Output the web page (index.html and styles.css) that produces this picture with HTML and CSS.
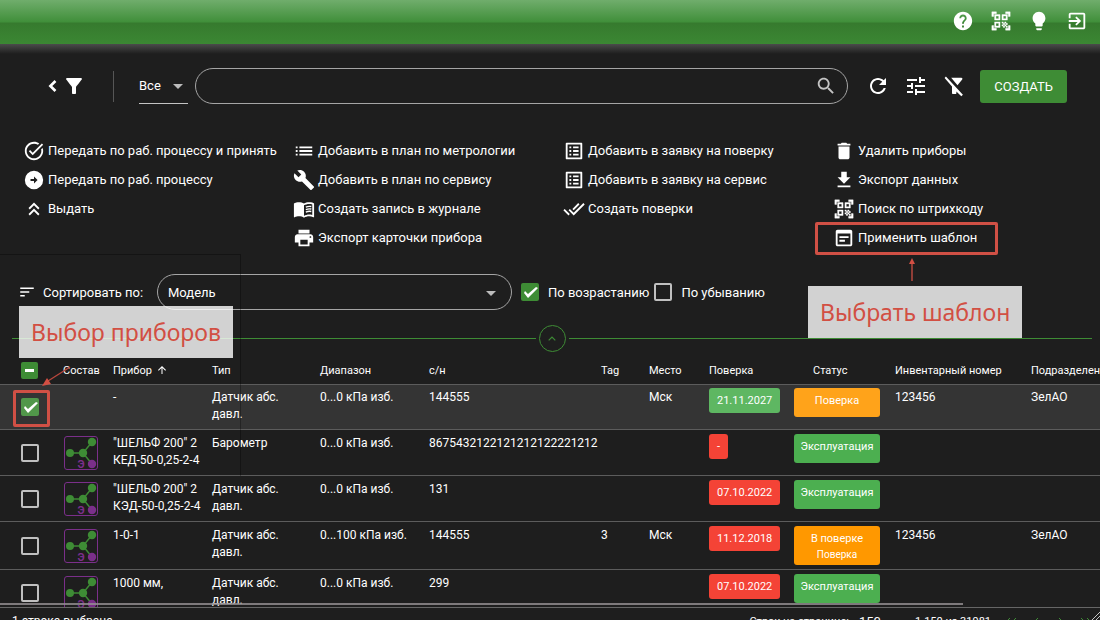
FILE: index.html
```html
<!DOCTYPE html>
<html lang="ru">
<head>
<meta charset="utf-8">
<meta name="viewport" content="width=device-width, initial-scale=1">
<title>Приборы</title>
<link rel="stylesheet" href="styles.css">
</head>
<body>
<svg class="sprite" aria-hidden="true">
  <symbol id="i-help" viewBox="0 0 24 24"><path d="M12 2C6.48 2 2 6.48 2 12s4.48 10 10 10 10-4.48 10-10S17.52 2 12 2zm1 17h-2v-2h2v2zm2.07-7.75l-.9.92C13.45 12.9 13 13.5 13 15h-2v-.5c0-1.1.45-2.1 1.17-2.83l1.24-1.26c.37-.36.59-.86.59-1.41 0-1.1-.9-2-2-2s-2 .9-2 2H8c0-2.21 1.79-4 4-4s4 1.79 4 4c0 .88-.36 1.68-.93 2.25z"/></symbol>
  <symbol id="i-qr" viewBox="0 0 24 24"><path stroke="currentColor" stroke-width=".4" d="M9.5 6.5v3h-3v-3h3M11 5H5v6h6V5zM9.5 14.5v3h-3v-3h3M11 13H5v6h6v-6zM17.5 6.5v3h-3v-3h3M19 5h-6v6h6V5zM13 13h1.5v1.5H13zM14.5 14.5H16V16h-1.5zM16 13h1.5v1.5H16zM13 16h1.5v1.5H13zM14.5 17.5H16V19h-1.5zM16 16h1.5v1.5H16zM17.5 14.5H19V16h-1.5zM17.5 17.5H19V19h-1.5zM22 7h-2V4h-3V2h5v5zM22 22v-5h-2v3h-3v2h5zM2 22h5v-2H4v-3H2v5zM2 2v5h2V4h3V2H2z"/></symbol>
  <symbol id="i-bulb" viewBox="0 0 24 24"><path d="M9 21c0 .55.45 1 1 1h4c.55 0 1-.45 1-1v-1H9v1zm3-19C8.14 2 5 5.14 5 9c0 2.38 1.19 4.47 3 5.74V17c0 .55.45 1 1 1h6c.55 0 1-.45 1-1v-2.26c1.81-1.27 3-3.36 3-5.74 0-3.86-3.14-7-7-7z"/></symbol>
  <symbol id="i-exit" viewBox="0 0 24 24"><path d="M10.09 15.59L11.5 17l5-5-5-5-1.41 1.41L12.67 11H3v2h9.67l-2.58 2.59zM19 3H5c-1.11 0-2 .9-2 2v4h2V5h14v14H5v-4H3v4c0 1.1.89 2 2 2h14c1.1 0 2-.9 2-2V5c0-1.1-.9-2-2-2z"/></symbol>
  <symbol id="i-back" viewBox="6 0 12 24"><path d="M15.4 7.9L13.5 6l-6 6 6 6 1.9-1.9L11.3 12z"/></symbol>
  <symbol id="i-filter" viewBox="0 0 24 24"><path d="M4.25 5.61C6.27 8.2 10 13 10 13v6c0 .55.45 1 1 1h2c.55 0 1-.45 1-1v-6s3.72-4.8 5.74-7.39A1 1 0 0 0 18.95 4H5.04c-.83 0-1.3.95-.79 1.61z"/></symbol>
  <symbol id="i-filter-off" viewBox="0 0 24 24"><path d="M20.2 5.4C20.7 4.8 20.3 3.8 19.4 3.8H9.2l6.3 7.4zM3.9 2.6L2.6 3.9 10 12.5V19c0 .55.45 1 1 1h2.4c.55 0 1-.45 1-1v-1.6l4.9 4.9 1.6-1.6z"/></symbol>
  <symbol id="i-refresh" viewBox="0 0 24 24"><path d="M17.65 6.35C16.2 4.9 14.21 4 12 4c-4.42 0-7.99 3.58-7.99 8s3.57 8 7.99 8c3.73 0 6.84-2.55 7.73-6h-2.08c-.82 2.33-3.04 4-5.65 4-3.31 0-6-2.69-6-6s2.69-6 6-6c1.66 0 3.14.69 4.22 1.78L13 11h7V4l-2.35 2.35z"/></symbol>
  <symbol id="i-tune" viewBox="0 0 24 24"><path d="M3 17v2h6v-2H3zM3 5v2h10V5H3zm10 16v-2h8v-2h-8v-2h-2v6h2zM7 9v2H3v2h4v2h2V9H7zm14 4v-2H11v2h10zm-6-4h2V7h4V5h-4V3h-2v6z"/></symbol>
  <symbol id="i-search" viewBox="0 0 24 24"><path d="M15.5 14h-.79l-.28-.27C15.41 12.59 16 11.11 16 9.5 16 5.91 13.09 3 9.5 3S3 5.91 3 9.5 5.91 16 9.5 16c1.61 0 3.09-.59 4.23-1.57l.27.28v.79l5 4.99L20.49 19l-4.99-5zm-6 0C7.01 14 5 11.99 5 9.5S7.01 5 9.5 5 14 7.01 14 9.5 11.99 14 9.5 14z"/></symbol>
  <symbol id="i-task" viewBox="0 0 24 24"><path d="M22 5.18L10.59 16.6l-4.24-4.24 1.41-1.41 2.83 2.83 10-10L22 5.18zM19.79 10.22c.13.57.21 1.17.21 1.78 0 4.42-3.58 8-8 8s-8-3.58-8-8 3.58-8 8-8c1.58 0 3.04.46 4.28 1.25l1.44-1.44C16.1 2.67 14.13 2 12 2 6.48 2 2 6.48 2 12s4.48 10 10 10 10-4.48 10-10c0-1.19-.22-2.33-.6-3.39l-1.61 1.61z"/></symbol>
  <symbol id="i-forward" viewBox="0 0 24 24"><path fill-rule="evenodd" d="M12 2a10 10 0 1 0 0 20 10 10 0 0 0 0-20zM12 8.2l3.9 3.8-3.9 3.8V13H8.2v-2H12z"/></symbol>
  <symbol id="i-up2" viewBox="0 0 24 24"><path d="M6 17.59L7.41 19 12 14.42 16.59 19 18 17.59l-6-6zM6 11l1.41 1.41L12 7.83l4.59 4.58L18 11l-6-6z"/></symbol>
  <symbol id="i-list" viewBox="0 0 24 24"><path d="M3 13h2v-2H3v2zm0 4h2v-2H3v2zm0-8h2V7H3v2zm4 4h14v-2H7v2zm0 4h14v-2H7v2zM7 7v2h14V7H7z"/></symbol>
  <symbol id="i-build" viewBox="0 0 24 24"><path d="M22.7 19l-9.1-9.1c.9-2.3.4-5-1.5-6.9-2-2-5-2.4-7.4-1.3L9 6 6 9 1.6 4.7C.4 7.1.9 10.1 2.9 12.1c1.9 1.9 4.6 2.4 6.9 1.5l9.1 9.1c.4.4 1 .4 1.4 0l2.3-2.3c.5-.4.5-1.1.1-1.4z"/></symbol>
  <symbol id="i-book" viewBox="0 0 24 24"><path d="M21 5c-1.11-.35-2.33-.5-3.5-.5-1.95 0-4.05.4-5.5 1.5-1.45-1.1-3.55-1.5-5.5-1.5S2.45 4.9 1 6v14.65c0 .25.25.5.5.5.1 0 .15-.05.25-.05C3.1 20.45 5.05 20 6.5 20c1.95 0 4.05.4 5.5 1.5 1.35-.85 3.8-1.5 5.5-1.5 1.65 0 3.35.3 4.75 1.05.1.05.15.05.25.05.25 0 .5-.25.5-.5V6c-.6-.45-1.25-.75-2-1zm0 13.5c-1.1-.35-2.3-.5-3.5-.5-1.7 0-4.15.65-5.5 1.5V8c1.35-.85 3.8-1.5 5.5-1.5 1.2 0 2.4.15 3.5.5v11.5z"/><path fill="none" stroke="currentColor" stroke-width="1.5" d="M14 9.9c2-.8 4-1 6-.6M14 12.6c2-.8 4-1 6-.6M14 15.3c2-.8 4-1 6-.6"/></symbol>
  <symbol id="i-print" viewBox="0 0 24 24"><path d="M19 8H5c-1.66 0-3 1.34-3 3v6h4v4h12v-4h4v-6c0-1.66-1.34-3-3-3zm-3 11H8v-5h8v5zm3-7c-.55 0-1-.45-1-1s.45-1 1-1 1 .45 1 1-.45 1-1 1zm-1-9H6v4h12V3z"/></symbol>
  <symbol id="i-listalt" viewBox="0 0 24 24"><path d="M19 5v14H5V5h14m1.1-2H3.9c-.5 0-.9.4-.9.9v16.2c0 .4.4.9.9.9h16.2c.4 0 .9-.5.9-.9V3.9c0-.5-.5-.9-.9-.9zM11 7h6v2h-6V7zm0 4h6v2h-6v-2zm0 4h6v2h-6zM7 7h2v2H7zm0 4h2v2H7zm0 4h2v2H7z"/></symbol>
  <symbol id="i-doneall" viewBox="0 0 24 24"><path d="M18 7l-1.41-1.41-6.34 6.34 1.41 1.41L18 7zm4.24-1.41L11.66 16.17 7.48 12l-1.41 1.41L11.66 19l12-12-1.42-1.41zM.41 13.41L6 19l1.41-1.41L1.83 12 .41 13.41z"/></symbol>
  <symbol id="i-delete" viewBox="0 0 24 24"><path d="M6 19c0 1.1.9 2 2 2h8c1.1 0 2-.9 2-2V7H6v12zM19 4h-3.5l-1-1h-5l-1 1H5v2h14V4z"/></symbol>
  <symbol id="i-download" viewBox="0 0 24 24"><path d="M19 9h-4V3H9v6H5l7 7 7-7zM5 18v2h14v-2H5z"/></symbol>
  <symbol id="i-template" viewBox="0 0 24 24"><path d="M19 3H5c-1.11 0-2 .9-2 2v14c0 1.1.89 2 2 2h14c1.1 0 2-.9 2-2V5c0-1.1-.89-2-2-2zm0 16H5V7h14v12zm-2-7H7v-2h10v2zm-4 4H7v-2h6v2z"/></symbol>
  <symbol id="i-sort" viewBox="0 0 24 24"><path d="M3 18h6v-2H3v2zM3 6v2h18V6H3zm0 7h12v-2H3v2z"/></symbol>
  <symbol id="i-asc" viewBox="0 0 24 24"><path d="M4 12l1.41 1.41L11 7.83V20h2V7.83l5.58 5.59L20 12l-8-8-8 8z"/></symbol>
  <symbol id="i-drop" viewBox="0 0 10 5"><path d="M0 0h10L5 5z"/></symbol>
  <symbol id="i-first" viewBox="0 0 12 8"><path d="M5 0L1 4l4 4M11 0L7 4l4 4" fill="none" stroke="currentColor"/></symbol>
  <symbol id="i-prev" viewBox="0 0 12 8"><path d="M8 0L4 4l4 4" fill="none" stroke="currentColor"/></symbol>
  <symbol id="i-next" viewBox="0 0 12 8"><path d="M4 0l4 4-4 4" fill="none" stroke="currentColor"/></symbol>
  <symbol id="i-last" viewBox="0 0 12 8"><path d="M1 0l4 4-4 4M7 0l4 4-4 4" fill="none" stroke="currentColor"/></symbol>
  <symbol id="i-nodes" viewBox="0 0 34 34">
    <rect x=".5" y=".5" width="33" height="33" rx="2.5" fill="none" stroke="#7b2f8a"/>
    <path d="M6 17h13L28 6M19 17l9 11" fill="none" stroke="#3e8c35" stroke-width="1.4"/>
    <g fill="#3e8c35"><circle cx="6" cy="17" r="4"/><circle cx="19" cy="17" r="4.2"/><circle cx="28" cy="6" r="4.2"/></g>
    <circle cx="28" cy="28" r="4.2" fill="#7b2f8a"/>
    <text x="13.6" y="31.8" class="nodes-letter">Э</text>
  </symbol>
</svg>

<header class="appbar">
  <button class="icon-btn" aria-label="Справка"><svg class="ic22"><use href="#i-help"/></svg></button>
  <button class="icon-btn" aria-label="Сканировать код"><svg class="ic22"><use href="#i-qr"/></svg></button>
  <button class="icon-btn" aria-label="Тема"><svg class="ic22"><use href="#i-bulb"/></svg></button>
  <button class="icon-btn" aria-label="Выход"><svg class="ic22"><use href="#i-exit"/></svg></button>
</header>

<main class="page">
  <div class="toolbar">
    <button class="icon-btn filter-toggle" aria-label="Фильтр"><svg class="ic-back"><use href="#i-back"/></svg><svg class="ic24"><use href="#i-filter"/></svg></button>
    <span class="rule"></span>
    <span class="scope"><select aria-label="Область поиска"><option>Все</option></select><svg class="drop"><use href="#i-drop"/></svg></span>
    <label class="search"><input type="text" aria-label="Поиск"><svg class="ic22"><use href="#i-search"/></svg></label>
    <div class="tools">
      <button class="icon-btn" aria-label="Обновить"><svg class="ic24"><use href="#i-refresh"/></svg></button>
      <button class="icon-btn" aria-label="Настройки"><svg class="ic24"><use href="#i-tune"/></svg></button>
      <button class="icon-btn" aria-label="Сбросить фильтр"><svg class="ic24"><use href="#i-filter-off"/></svg></button>
      <button class="create">СОЗДАТЬ</button>
    </div>
  </div>

  <div class="actions">
    <div class="group">
      <button class="action"><svg class="ic22"><use href="#i-task"/></svg>Передать по раб. процессу и принять</button>
      <button class="action"><svg class="ic22"><use href="#i-forward"/></svg>Передать по раб. процессу</button>
      <button class="action"><svg class="ic22"><use href="#i-up2"/></svg>Выдать</button>
    </div>
    <div class="group">
      <button class="action"><svg class="ic22"><use href="#i-list"/></svg>Добавить в план по метрологии</button>
      <button class="action"><svg class="ic22"><use href="#i-build"/></svg>Добавить в план по сервису</button>
      <button class="action"><svg class="ic22"><use href="#i-book"/></svg>Создать запись в журнале</button>
      <button class="action"><svg class="ic22"><use href="#i-print"/></svg>Экспорт карточки прибора</button>
    </div>
    <div class="group">
      <button class="action"><svg class="ic22"><use href="#i-listalt"/></svg>Добавить в заявку на поверку</button>
      <button class="action"><svg class="ic22"><use href="#i-listalt"/></svg>Добавить в заявку на сервис</button>
      <button class="action"><svg class="ic22"><use href="#i-doneall"/></svg>Создать поверки</button>
    </div>
    <div class="group">
      <button class="action"><svg class="ic22"><use href="#i-delete"/></svg>Удалить приборы</button>
      <button class="action"><svg class="ic22"><use href="#i-download"/></svg>Экспорт данных</button>
      <button class="action"><svg class="ic22"><use href="#i-qr"/></svg>Поиск по штрихкоду</button>
      <button class="action"><svg class="ic22"><use href="#i-template"/></svg>Применить шаблон</button>
    </div>
  </div>

  <div class="sorting">
    <label class="sort-label" for="sort-field"><svg class="ic18"><use href="#i-sort"/></svg>Сортировать по:</label>
    <span class="sort-select"><select id="sort-field"><option>Модель</option></select><svg class="drop"><use href="#i-drop"/></svg></span>
    <label class="check"><input type="checkbox" class="box" checked>По возрастанию</label>
    <label class="check"><input type="checkbox" class="box">По убыванию</label>
  </div>

  <div class="divider">
    <button class="collapse" aria-label="Свернуть"><svg viewBox="0 0 8 5"><path d="M.7 4.3L4 1l3.3 3.3" fill="none" stroke="currentColor" stroke-width="1.2"/></svg></button>
  </div>

  <div class="scroller">
    <table class="grid">
      <colgroup><col class="c-check"><col class="c-comp"><col class="c-name"><col class="c-type"><col class="c-range"><col class="c-serial"><col class="c-tag"><col class="c-place"><col class="c-verif"><col class="c-status"><col class="c-inv"><col></colgroup>
      <thead>
        <tr><th class="mid"><input type="checkbox" class="box partial" aria-label="Выбрать все"></th><th>Состав</th><th><span class="sorted">Прибор<svg class="ic12"><use href="#i-asc"/></svg></span></th><th>Тип</th><th>Диапазон</th><th>с/н</th><th>Tag</th><th>Место</th><th>Поверка</th><th class="th-status">Статус</th><th>Инвентарный номер</th><th>Подразделение</th></tr>
      </thead>
      <tbody>
        <tr class="selected h45"><td class="mid"><input type="checkbox" class="box" checked aria-label="Выбрать строку 1"></td><td></td><td>-</td><td class="type">Датчик абс. давл.</td><td>0...0 кПа изб.</td><td>144555</td><td></td><td>Мск</td><td class="badge"><span class="chip ok">21.11.2027</span></td><td class="badge"><span class="status warn">Поверка</span></td><td>123456</td><td>ЗелАО</td></tr>
        <tr class="h46"><td class="mid"><input type="checkbox" class="box" aria-label="Выбрать строку 2"></td><td class="mid"><svg class="nodes"><use href="#i-nodes"/></svg></td><td>"ШЕЛЬФ 200" 2 КЕД-50-0,25-2-4</td><td class="type">Барометр</td><td>0...0 кПа изб.</td><td>8675432122121212122221212</td><td></td><td></td><td class="badge"><span class="chip bad">-</span></td><td class="badge"><span class="status ok">Эксплуатация</span></td><td></td><td></td></tr>
        <tr class="h46"><td class="mid"><input type="checkbox" class="box" aria-label="Выбрать строку 3"></td><td class="mid"><svg class="nodes"><use href="#i-nodes"/></svg></td><td>"ШЕЛЬФ 200" 2 КЭД-50-0,25-2-4</td><td class="type">Датчик абс. давл.</td><td>0...0 кПа изб.</td><td>131</td><td></td><td></td><td class="badge"><span class="chip bad">07.10.2022</span></td><td class="badge"><span class="status ok">Эксплуатация</span></td><td></td><td></td></tr>
        <tr class="h48"><td class="mid"><input type="checkbox" class="box" aria-label="Выбрать строку 4"></td><td class="mid"><svg class="nodes"><use href="#i-nodes"/></svg></td><td>1-0-1</td><td class="type">Датчик абс. давл.</td><td>0...100 кПа изб.</td><td>144555</td><td>3</td><td>Мск</td><td class="badge"><span class="chip bad">11.12.2018</span></td><td class="badge"><span class="status warn">В поверке<small>Поверка</small></span></td><td>123456</td><td>ЗелАО</td></tr>
        <tr class="h46"><td class="mid"><input type="checkbox" class="box" aria-label="Выбрать строку 5"></td><td class="mid"><svg class="nodes"><use href="#i-nodes"/></svg></td><td>1000 мм,</td><td class="type">Датчик абс. давл.</td><td>0...0 кПа изб.</td><td>299</td><td></td><td></td><td class="badge"><span class="chip bad">07.10.2022</span></td><td class="badge"><span class="status ok">Эксплуатация</span></td><td></td><td></td></tr>
      </tbody>
    </table>
    <div class="thumb"></div>
  </div>
</main>

<footer class="footer">
  <span class="picked">1 строка выбрана</span>
  <span>Строк на странице:</span><span class="per-page">150</span><span class="range">1-150 из 31981</span>
  <span class="pager">
    <button aria-label="Первая страница"><svg><use href="#i-first"/></svg></button>
    <button aria-label="Предыдущая страница"><svg><use href="#i-prev"/></svg></button>
    <button aria-label="Следующая страница"><svg><use href="#i-next"/></svg></button>
    <button aria-label="Последняя страница"><svg><use href="#i-last"/></svg></button>
  </span>
</footer>

<div class="guide"></div>
<div class="frame frame-template"></div>
<div class="frame frame-check"></div>
<svg class="arrow arrow-template" viewBox="0 0 8 24"><path d="M4 23V6" stroke="#8f3d36" stroke-width="2"/><path d="M4 0l3 6H1z" fill="#d24f43"/></svg>
<svg class="arrow arrow-check" viewBox="0 0 30 21"><path d="M28 1L6 15" stroke="#b8473d" stroke-width="1.4"/><path d="M0 20l5-8 4 6z" fill="#d24f43"/></svg>
<svg class="arrow corner" viewBox="0 0 8 8"><path d="M0 8l8-8M4 8l4-4" stroke="#c4c4c4"/></svg>
<div class="note note-devices">Выбор приборов</div>
<div class="note note-template">Выбрать шаблон</div>
</body>
</html>
```

FILE: styles.css
```css
* { box-sizing: border-box; }
html, body { height: 100%; }
body {
  margin: 0;
  display: flex;
  flex-direction: column;
  overflow: hidden;
  position: relative;
  background: #1e1e1e;
  color: #fff;
  font: 13px/17px Roboto, "Liberation Sans", sans-serif;
}
button, select, input { font: inherit; color: inherit; }
button { border: 0; padding: 0; background: none; cursor: pointer; }
svg { display: block; fill: currentColor; flex: none; }
.sprite { position: absolute; width: 0; height: 0; }
.ic12 { width: 12px; height: 12px; }
.ic18 { width: 18px; height: 18px; }
.ic22 { width: 22px; height: 22px; }
.ic24 { width: 24px; height: 24px; }
.ic-back { width: 12px; height: 24px; }

.appbar {
  flex: none;
  height: 44px;
  padding: 0 12px 2px 0;
  display: flex;
  align-items: center;
  justify-content: flex-end;
  gap: 16px;
  background: linear-gradient(#70ad6c 0, #408f3a 22px, #367a2e 23px, #3b8733 44px);
}
.page {
  flex: 1;
  min-height: 0;
  display: flex;
  flex-direction: column;
  padding-top: 24px;
  background: linear-gradient(#4b4b4b, #1e1e1e 10px);
}

.toolbar { flex: none; height: 36px; display: flex; align-items: center; padding: 0 33px 0 47px; }
.filter-toggle { display: flex; gap: 3px; }
.rule { width: 1px; height: 31px; margin: 0 25px 0 27px; background: #565656; }
.scope { position: relative; width: 49px; height: 36px; margin-right: 7px; border-bottom: 1px solid #c4c4c4; }
.scope select, .sort-select select {
  appearance: none;
  width: 100%;
  height: 100%;
  padding: 0;
  border: 0;
  outline: 0;
  background: transparent;
}
.drop { position: absolute; width: 10px; height: 5px; top: 16px; color: #bcbcbc; pointer-events: none; }
.scope .drop { right: 5px; }
.search {
  flex: 1;
  height: 36px;
  display: flex;
  align-items: center;
  padding: 0 10px 0 18px;
  border: 1px solid #a5a5a5;
  border-radius: 18px;
  color: #c4c4c4;
}
.search input { flex: 1; min-width: 0; border: 0; outline: 0; background: transparent; }
.tools { display: flex; align-items: center; gap: 14px; margin-left: 18px; }
.create {
  height: 33px;
  padding: 0 14px;
  border-radius: 3px;
  background: #3e8c35;
}

.actions { flex: none; display: grid; grid-template-columns: 270px 270px 270px 1fr; margin-top: 32px; padding-left: 23px; }
.group { display: flex; flex-direction: column; align-items: flex-start; }
.action { height: 29px; display: flex; align-items: center; gap: 3px; white-space: nowrap; }

.sorting { flex: none; height: 36px; margin-top: 22px; padding-left: 18px; display: flex; align-items: center; }
.sort-label { width: 139px; display: flex; align-items: center; gap: 7px; white-space: nowrap; }
.sort-select { position: relative; width: 355px; height: 36px; margin-right: 9px; border: 1px solid #a5a5a5; border-radius: 18px; }
.sort-select select { padding-left: 10px; }
.sort-select .drop { right: 15px; }
.check { display: flex; align-items: center; gap: 9px; margin-right: 5px; }

.box {
  appearance: none;
  display: block;
  width: 18px;
  height: 18px;
  margin: 0;
  flex: none;
  border: 2px solid #c0c0c0;
  border-radius: 2px;
}
.box:checked, .box.partial { border: 0; background: #3e8c35; }
.selected .box { background: #51974a; }
.box:checked::before {
  content: "";
  display: block;
  width: 18px;
  height: 18px;
  background: #fff;
  clip-path: polygon(3px 10px, 4px 8px, 7px 11px, 15px 4px, 17px 5px, 7px 15px);
}
.box.partial { width: 17px; height: 17px; padding: 7px 4px; }
.box.partial::before { content: ""; display: block; width: 9px; height: 3px; background: #fff; }

.divider { flex: none; height: 27px; margin: 15px 8px 0 12px; display: flex; align-items: center; gap: 3px; }
.divider::before, .divider::after { content: ""; flex: 1; height: 1px; background: #3e8c35; }
.collapse { width: 27px; height: 27px; display: grid; place-items: center; border: 1px solid #3e8c35; border-radius: 50%; color: #3e8c35; }
.collapse svg { width: 8px; height: 5px; }

.scroller { flex: 1; min-height: 0; position: relative; overflow: hidden; margin-top: 4px; border-bottom: 1px solid #666; }
.grid { width: 1140px; min-width: 100%; table-layout: fixed; border-collapse: separate; border-spacing: 0; font-size: 12px; }
.c-check { width: 57px; }
.c-comp { width: 50px; }
.c-name { width: 99px; }
.c-type { width: 108px; }
.c-range { width: 109px; }
.c-serial { width: 172px; }
.c-tag { width: 48px; }
.c-place { width: 60px; }
.c-verif { width: 85px; }
.c-status { width: 101px; }
.c-inv { width: 136px; }
.grid th, .grid td { padding: 0 0 0 6px; border-bottom: 1px solid #5c5c5c; text-align: left; }
.grid th { height: 29px; font-size: 11px; font-weight: 400; white-space: nowrap; }
.grid td { padding-top: 5px; vertical-align: top; }
.grid .badge, .grid .selected td { padding-top: 4px; }
.grid .selected .badge { padding-top: 3px; }
.grid .type { padding-right: 20px; }
.grid .mid, .grid .selected .mid { padding-top: 0; padding-left: 7px; vertical-align: middle; }
.grid .mid:first-child, .grid .selected .mid:first-child { padding-left: 21px; }
.grid .th-status { padding-left: 25px; }
.sorted { display: flex; align-items: center; gap: 4px; }
.h45 td { height: 45px; }
.h46 td { height: 46px; }
.h48 td { height: 48px; }
.selected td { background: #343434; }
.nodes { width: 34px; height: 34px; }
.nodes-letter { font: bold 11px Roboto, sans-serif; fill: #7b2f8a; }
.chip { display: inline-block; height: 25px; padding: 0 8px; border-radius: 3px; font-size: 11px; line-height: 25px; vertical-align: top; }
.status { display: block; width: 86px; min-height: 29px; padding: 5px 0 3px; border-radius: 3px; font-size: 11px; line-height: 16px; text-align: center; }
.status small { display: block; font-size: 10px; line-height: 15px; }
.ok { background: #4caf50; }
.bad { background: #f44336; }
.warn { background: #ff9800; }
.selected .ok { background: #5eb762; }
.selected .warn { background: #ffa31a; }
.thumb { position: absolute; left: 0; bottom: 2px; width: 87.5%; height: 2px; background: rgba(150, 145, 148, .8); }

.footer { flex: none; height: 12px; padding: 5px 8px 0 12px; overflow: hidden; display: flex; font-size: 11px; white-space: nowrap; }
.picked { margin-right: auto; font-size: 12px; }
.per-page { margin: 0 34px 0 10px; font-size: 13px; }
.pager { display: flex; align-items: flex-start; gap: 13px; margin-left: 14px; padding-top: 5px; color: #3e8c35; }
.pager svg { width: 12px; height: 8px; }

.guide { position: absolute; left: -1px; top: 254px; width: 242px; height: 222px; border: 1px solid rgba(0, 0, 0, .3); border-bottom: 0; pointer-events: none; }
.frame { position: absolute; border: 3px solid #d05045; border-radius: 2px; pointer-events: none; }
.frame-template { left: 815px; top: 222px; width: 183px; height: 33px; }
.frame-check { left: 13px; top: 390px; width: 37px; height: 37px; }
.arrow { position: absolute; pointer-events: none; }
.arrow-template { left: 908px; top: 258px; width: 8px; height: 24px; }
.arrow-check { left: 42px; top: 366px; width: 30px; height: 21px; }
.corner { right: 0; bottom: 0; width: 8px; height: 8px; }
.note {
  position: absolute;
  height: 52px;
  padding: 0 12px;
  background: rgba(255, 255, 255, .8);
  color: #d24f43;
  font: 23px/52px "Noto Sans", "Open Sans", sans-serif;
  white-space: nowrap;
}
.note-devices { left: 19px; top: 306px; }
.note-template { left: 808px; top: 286px; }
```
